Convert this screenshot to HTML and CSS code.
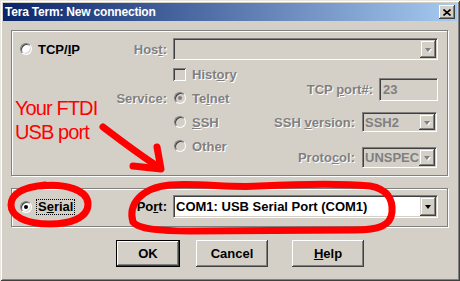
FILE: index.html
```html
<!DOCTYPE html>
<html>
<head>
<meta charset="utf-8">
<link rel="stylesheet" href="styles.css">
</head>
<body>
<div class="window">
  <div class="titlebar">
    <span class="title">Tera Term: New connection</span>
    <span class="close"><svg width="8" height="7" viewBox="0 0 8 7"><path d="M0.5 0.5 L7.5 6.5 M7.5 0.5 L0.5 6.5" stroke="#000" stroke-width="1.6" fill="none"/></svg></span>
  </div>
  <div class="client">
    <div class="group g1">
      <div class="row">
        <div class="lead">
          <span class="opt"><span class="radio"></span><span>TCP/<u>I</u>P</span></span>
          <span class="dis">Hos<u>t</u>:</span>
        </div>
        <div class="combo off w-wide"><span class="val"></span><span class="dd"><i class="tri"></i></span></div>
      </div>
      <div class="opts">
        <div class="lgrid">
          <span></span>
          <span class="opt dis"><span class="check"></span><span>Hist<u>o</u>ry</span></span>
          <span class="dis lbl">Service:</span>
          <span class="opt dis"><span class="radio off on sm"></span><span>Te<u>l</u>net</span></span>
          <span></span>
          <span class="opt dis"><span class="radio off sm"></span><span><u>S</u>SH</span></span>
          <span></span>
          <span class="opt dis"><span class="radio off sm"></span><span>Other</span></span>
        </div>
        <div class="rcol">
          <div class="frow f-port"><span class="dis">TCP <u>p</u>ort#:</span><div class="edit">23</div></div>
          <div class="frow f-ssh"><span class="dis">SSH <u>v</u>ersion:</span><div class="combo off w-small h20"><span class="val">SSH2</span><span class="dd"><i class="tri"></i></span></div></div>
          <div class="frow f-proto"><span class="dis">Proto<u>c</u>ol:</span><div class="combo off w-small h21"><span class="val">UNSPEC</span><span class="dd"><i class="tri"></i></span></div></div>
        </div>
      </div>
    </div>
    <div class="group g2">
      <div class="row r23">
        <div class="lead">
          <span class="opt opt-serial"><span class="radio on"></span><span class="focus">S<u>e</u>rial</span></span>
          <span>Po<u>r</u>t:</span>
        </div>
        <div class="combo w-wide h23"><span class="val">COM1: USB Serial Port (COM1)</span><span class="dd"><i class="tri"></i></span></div>
      </div>
    </div>
    <div class="buttons">
      <span class="btn btn-ok">OK</span>
      <span class="btn btn-cancel">Cancel</span>
      <span class="btn btn-help"><u>H</u>elp</span>
    </div>
  </div>
  <svg class="ink" width="460" height="281" viewBox="0 0 460 281">
    <g stroke="#ff0000" stroke-width="7" fill="none" stroke-linecap="round" stroke-linejoin="round" filter="url(#soft)">
      <path d="M103 127 C120 140 140 155 160 168"/>
      <path d="M133 166 L161 169 M157 147 L161 169"/>
      <path d="M40 186 C65 183 88 190 88 204 C88 218 70 224 50 224 C25 224 11 216 11 205 C11 193 25 187 45 185"/>
      <path d="M133 222 C128 205 140 188 170 185 C200 183 230 188 260 186 C300 184 340 183 370 186 C388 189 393 200 392 212 C391 226 378 230 355 230 L190 231 C160 231 138 229 133 222"/>
    </g>
    <defs><filter id="soft"><feGaussianBlur stdDeviation="0.6"/></filter></defs>
  </svg>
  <div class="note">Your FTDI<br>USB port</div>
</div>
</body>
</html>
```
FILE: styles.css
```css
* { box-sizing: border-box; }
body { margin: 0; font-family: "Liberation Sans", Arial, sans-serif; font-size: 13px; font-weight: bold; color: #000; }
u { text-underline-offset: 1px; }
.window { position: relative; width: 460px; height: 281px; background: #d4d0c8; padding: 3px;
  box-shadow: inset 1px 1px #e8e6e0, inset -1px -1px #404040, inset 2px 2px #fff, inset -2px -2px #808080; }
.titlebar { height: 18px; display: flex; align-items: center; justify-content: space-between; padding: 0 2px 0 2px;
  background: linear-gradient(to right, #0a246a, #a6caf0); color: #fff; }
.title { font-size: 12px; letter-spacing: -0.2px; }
.close { width: 16px; height: 14px; background: #d4d0c8; display: flex; align-items: center; justify-content: center;
  box-shadow: inset -1px -1px #404040, inset 1px 1px #fff, inset -2px -2px #808080; }
.client { padding: 9px 0 0 8px; }
.group { width: 437px; border: 1px solid #808080; box-shadow: inset 1px 1px #fff, 1px 1px #fff; }
.g1 { height: 146px; padding: 7px 9px 0 8px; }
.g2 { height: 39px; margin-top: 12px; padding: 6px 9px 0 8px; }
.row { display: flex; align-items: center; gap: 6px; height: 22px; }
.r23 { height: 23px; }
.lead { width: 147px; display: flex; align-items: center; justify-content: space-between; }
.opt { display: flex; align-items: center; gap: 6px; }
.opt-serial { gap: 5px; }
.focus { outline: 1px dotted #000; padding: 0 1px; line-height: 14px; }
.dis { color: #808080; text-shadow: 1px 1px #fff; }
.radio { position: relative; width: 12px; height: 12px; border-radius: 50%; background: #fff; flex: none;
  border: 1px solid; border-color: #808080 #fff #fff #808080;
  box-shadow: inset 1px 1px #404040, inset -1px -1px #d4d0c8; }
.radio.off { background: #d4d0c8; }
.radio.sm { margin-left: 1px; }
.radio.on::after { content: ""; position: absolute; left: 3px; top: 3px; width: 4px; height: 4px; border-radius: 50%; background: #000; }
.radio.off.on::after { background: #808080; }
.check { width: 13px; height: 13px; background: #d4d0c8; flex: none;
  box-shadow: inset 1px 1px #808080, inset -1px -1px #fff, inset 2px 2px #404040, inset -2px -2px #d4d0c8; }
.opts { display: flex; justify-content: space-between; margin-top: 2px; }
.lgrid { display: grid; grid-template-columns: 147px auto; column-gap: 6px; grid-auto-rows: 24px; align-items: center; }
.lbl { text-align: right; }
.rcol { display: flex; flex-direction: column; align-items: flex-end; padding-top: 16px; }
.frow { display: flex; align-items: center; gap: 7px; }
.f-port { gap: 6px; }
.f-ssh { margin-top: 11px; margin-right: 1px; }
.f-proto { margin-top: 15px; margin-right: 1px; }
.edit { width: 59px; height: 23px; padding: 2px 3px; color: #808080; font-weight: normal; font-weight: bold; display: flex; align-items: center;
  border: 1px solid; border-color: #808080 #fff #fff #808080; box-shadow: inset 1px 1px #404040, inset -1px -1px #d4d0c8; }
.combo { display: flex; height: 22px; padding: 1px; background: #fff; overflow: hidden;
  border: 1px solid; border-color: #808080 #fff #fff #808080; box-shadow: inset 1px 1px #404040, inset -1px -1px #d4d0c8; }
.combo.off { background: #d4d0c8; color: #808080; }
.w-wide { width: 265px; }
.w-small { width: 75px; }
.h20 { height: 20px; }
.h21 { height: 21px; }
.h23 { height: 23px; }
.val { flex: 1; min-width: 0; overflow: hidden; white-space: nowrap; padding-left: 1px; display: flex; align-items: center; }
.dd { width: 16px; flex: none; background: #d4d0c8; display: flex; align-items: center; justify-content: center;
  box-shadow: inset -1px -1px #404040, inset 1px 1px #d4d0c8, inset -2px -2px #808080, inset 2px 2px #fff; }
.tri { width: 0; height: 0; border-left: 3.5px solid transparent; border-right: 3.5px solid transparent; border-top: 4px solid #000; margin-top: 1px; }
.off .tri { border-top-color: #808080; filter: drop-shadow(1px 1px 0 #fff); }
.buttons { display: flex; margin-top: 13px; padding-left: 105px; }
.btn { height: 27px; display: flex; align-items: center; justify-content: center; background: #d4d0c8;
  box-shadow: inset -1px -1px #404040, inset 1px 1px #fff, inset -2px -2px #808080; }
.btn-ok { width: 64px; border: 1px solid #000; box-shadow: inset -1px -1px #404040, inset 1px 1px #fff, inset -2px -2px #808080; }
.btn-cancel { width: 72px; margin-left: 16px; }
.btn-help { width: 72px; margin-left: 24px; }
.ink { position: absolute; left: 0; top: 0; pointer-events: none; }
.note { position: absolute; left: 15px; top: 96px; color: #ff0000; font-weight: normal; font-size: 20px; line-height: 24px; letter-spacing: -0.9px; }
```
